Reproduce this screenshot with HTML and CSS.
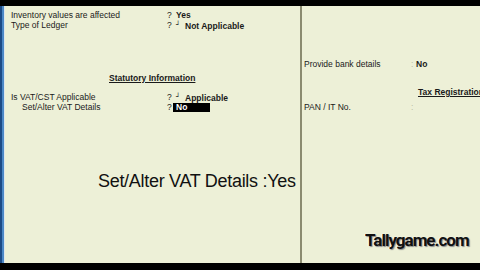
FILE: index.html
```html
<!DOCTYPE html>
<html lang="en">
<head>
    <meta charset="UTF-8">
    <title>Ledger Alteration</title>
    <link rel="stylesheet" href="styles.css">
</head>
<body>
    <div class="screen">
        <div class="topbar"></div>
        <div class="main">
            <div class="stripe"></div>

            <div class="left">
                <div class="row">
                    <span class="label">Inventory values are affected</span>
                    <span class="q">?</span>
                    <span class="value">Yes</span>
                </div>
                <div class="row">
                    <span class="label">Type of Ledger</span>
                    <span class="q">?</span>
                    <span class="value"><span class="mark">&#9496;</span>Not Applicable</span>
                </div>

                <div class="heading">Statutory Information</div>

                <div class="row vat">
                    <span class="label">Is VAT/CST Applicable</span>
                    <span class="q">?</span>
                    <span class="value"><span class="mark">&#9496;</span>Applicable</span>
                </div>
                <div class="row">
                    <span class="label sub">Set/Alter VAT Details</span>
                    <span class="q">?</span>
                    <span class="value cursor">No</span>
                </div>

                <div class="caption">Set/Alter VAT Details :Yes</div>
            </div>

            <div class="divider"></div>

            <div class="right">
                <div class="rrow">
                    <span class="label">Provide bank details</span>
                    <span class="colon">:</span>
                    <span class="value">No</span>
                </div>
                <div class="tax">Tax Registration</div>
                <div class="rrow">
                    <span class="label">PAN / IT No.</span>
                    <span class="colon">:</span>
                    <span class="value"></span>
                </div>

                <div class="brand">Tallygame.com</div>
            </div>
        </div>
        <div class="bottombar"></div>
    </div>
</body>
</html>
```

FILE: styles.css
```css
body{
    margin: 0;
    font-family: "Liberation Sans", Arial, sans-serif;
    background-color: #000;
}
.screen {
    width: 480px;
    height: 270px;
    display: flex;
    flex-direction: column;
    overflow: hidden;
}
.topbar {
    height: 6px;
    background-color: #000;
}
.bottombar {
    height: 7px;
    background-color: #000;
}
.main {
    flex: 1;
    display: flex;
    background-color: #edf0d7;
    color: #1a1a1a;
    font-size: 8.5px;
}
.stripe {
    width: 5px;
    background: linear-gradient(to right, #1d4b86 0, #1d4b86 2px, #4c88c6 2px, #4c88c6 4px, #dde6ec 4px);
}
.left {
    width: 295px;
    padding: 4px 0 0 6px;
    box-sizing: border-box;
    display: flex;
    flex-direction: column;
}
.divider {
    width: 2px;
    background-color: #8b8b70;
}
.right {
    flex: 1;
    padding: 53px 0 0 2px;
    display: flex;
    flex-direction: column;
    white-space: nowrap;
    overflow: hidden;
}

/* left panel rows */
.row {
    display: grid;
    grid-template-columns: 156px 6px 1fr;
    height: 10px;
    line-height: 10px;
}
.sub {
    padding-left: 11px;
}
.value {
    font-weight: bold;
    padding-left: 3px;
}
.mark {
    display: inline-block;
    width: 9px;
    font-family: "DejaVu Sans", sans-serif;
    font-size: 7px;
    font-weight: normal;
    vertical-align: 2px;
}
.cursor {
    background-color: #000;
    color: #fff;
    width: 34px;
    height: 9px;
    line-height: 9px;
    margin-top: 1px;
}
.heading {
    margin: 43px 0 0 98px;
    font-weight: bold;
    text-decoration: underline;
    line-height: 10px;
}
.vat {
    margin-top: 9px;
}
.caption {
    margin: 58px 0 0 87px;
    font-size: 18px;
    letter-spacing: -0.3px;
    line-height: 22px;
    color: #111;
}

/* right panel */
.rrow {
    display: grid;
    grid-template-columns: 107px 5px 1fr;
    height: 10px;
    line-height: 10px;
}
.rrow .value {
    padding-left: 0;
}
.colon {
    color: #b9bba4;
}
.tax {
    margin: 18px 0 0 114px;
    font-weight: bold;
    text-decoration: underline;
    line-height: 10px;
}
.rrow + .tax + .rrow {
    margin-top: 5px;
}
.brand {
    margin: auto 0 13px 61px;
    font-family: Roboto, sans-serif;
    font-weight: bold;
    font-size: 17px;
    letter-spacing: -1px;
    color: #111;
    text-shadow: 1px 1px 1px #8a8a8a, -1px 0 1px #fff;
}
```
